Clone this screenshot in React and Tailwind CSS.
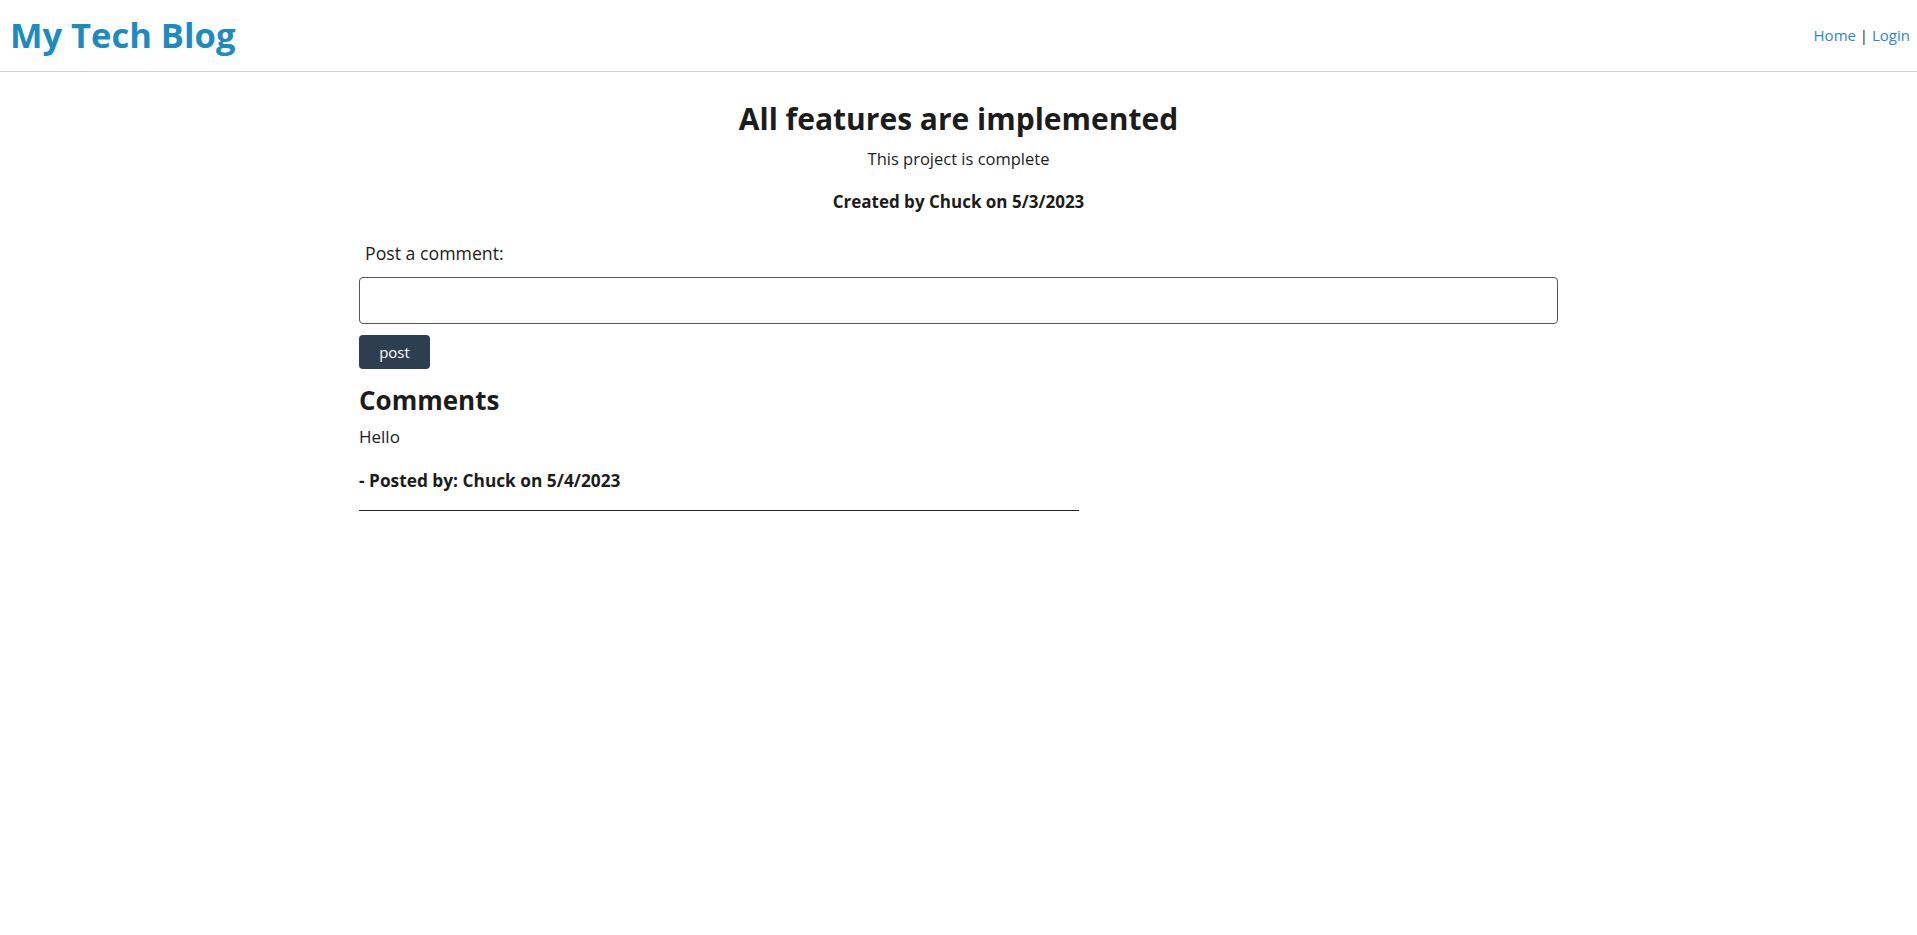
export default function App() {
  return (
    <div className="min-h-[935px] bg-white text-[#1c1c1c]" style={{ fontFamily: '"Open Sans", "Noto Sans", sans-serif' }}>
      <header className="flex h-[72px] items-center justify-between border-b border-[#cfcfcf] pl-[10px] pr-[7px]">
        <h1 className="text-[34.5px] font-bold leading-none text-[#1e8bc0]">My Tech Blog</h1>
        <nav className="text-[15px] leading-none">
          <a className="text-[#2f86c6]">Home</a>
          <span className="text-[#3a1a3a]"> | </span>
          <a className="text-[#2f86c6]">Login</a>
        </nav>
      </header>
      <main className="mx-auto w-[1199px]">
        <div className="text-center">
          <h2 className="mt-[27px] text-[30px] font-bold leading-[40px]">All features are implemented</h2>
          <p className="mt-[8px] text-[16.5px] leading-[24px]">This project is complete</p>
          <p className="mt-[19px] text-[17px] font-bold leading-[24px]">Created by Chuck on 5/3/2023</p>
        </div>
        <label className="mt-[27px] block pl-[6px] text-[17.7px] leading-[24px]">Post a comment:</label>
        <input className="mt-[12px] block h-[47px] w-full rounded-[4px] border border-[#555] px-2 outline-none" />
        <button className="mt-[11px] h-[34px] w-[71px] rounded-[4px] bg-[#2c3e50] text-[15px] text-white">post</button>
        <h3 className="mt-[15px] text-[26px] font-bold leading-[32px]">Comments</h3>
        <p className="mt-[9px] text-[17px] leading-[24px]">Hello</p>
        <p className="mt-[20px] text-[17.3px] font-bold leading-[24px]">- Posted by: Chuck on 5/4/2023</p>
        <div className="mt-[17px] h-px w-[720px] bg-[#222]" />
      </main>
    </div>
  );
}
